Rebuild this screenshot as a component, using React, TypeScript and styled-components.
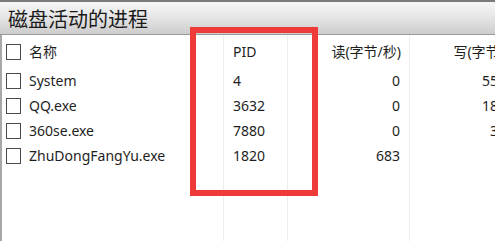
import React from "react";
import styled, { createGlobalStyle } from "styled-components";

const GlobalStyle = createGlobalStyle`
  html, body { margin: 0; padding: 0; background: #ffffff; }
  body { width: 495px; height: 241px; overflow: hidden; }
  #root { height: 100%; }
`;

const Window = styled.div`
  position: relative;
  width: 495px;
  height: 241px;
  display: flex;
  flex-direction: column;
  font-family: "Noto Sans", "Noto Sans CJK SC", sans-serif;
  color: #1e1e1e;
  overflow: hidden;
`;

const TitleBar = styled.div`
  height: 32px;
  border-top: 2px solid #7a7a7a;
  border-bottom: 1px solid #9a9a9a;
  background: linear-gradient(to bottom, #f6f6f6 0%, #e6e6e6 45%, #cdcdcd 100%);
  display: flex;
  align-items: center;
  padding-left: 8px;
  font-family: "Noto Sans CJK SC", sans-serif;
  font-size: 20px;
  color: #1a1a1a;
`;

const ListView = styled.div`
  flex: 1;
  display: flex;
  border-left: 2px solid #a8a8a8;
  background: #ffffff;
`;

const Column = styled.div<{ $width: number }>`
  flex: 0 0 ${(p) => p.$width}px;
  width: ${(p) => p.$width}px;
  display: flex;
  flex-direction: column;
  border-right: 1px solid #eeeef2;
  white-space: nowrap;
`;

const Cell = styled.div<{ $head?: boolean; $pad: string }>`
  height: ${(p) => (p.$head ? 33 : 25)}px;
  padding: ${(p) => p.$pad};
  display: flex;
  align-items: center;
  font-size: 14px;
  line-height: 1;
`;

const CellText = styled.span<{ $align?: "left" | "right" }>`
  width: 100%;
  text-align: ${(p) => p.$align ?? "left"};
`;

const CheckBox = styled.span`
  box-sizing: border-box;
  width: 15px;
  height: 16px;
  border: 1px solid #4a4a4a;
  background: #ffffff;
  margin-right: 8px;
  flex: 0 0 auto;
`;

const Highlight = styled.div`
  position: absolute;
  left: 190px;
  top: 27px;
  width: 128px;
  height: 169px;
  box-sizing: border-box;
  border: 6px solid #ef3a3a;
  pointer-events: none;
`;

const rows = [
  { name: "System", pid: "4", read: "0", write: "55296" },
  { name: "QQ.exe", pid: "3632", read: "0", write: "18432" },
  { name: "360se.exe", pid: "7880", read: "0", write: "3072" },
  { name: "ZhuDongFangYu.exe", pid: "1820", read: "683", write: "0" },
];

export default function App() {
  return (
    <>
      <GlobalStyle />
      <Window>
        <TitleBar>磁盘活动的进程</TitleBar>
        <ListView>
          <Column $width={221}>
            <Cell $head $pad="0 0 0 4px">
              <CheckBox />
              名称
            </Cell>
            {rows.map((r) => (
              <Cell key={r.name} $pad="0 0 0 4px">
                <CheckBox />
                {r.name}
              </Cell>
            ))}
          </Column>
          <Column $width={63}>
            <Cell $head $pad="0 0 0 9px">
              <CellText>PID</CellText>
            </Cell>
            {rows.map((r) => (
              <Cell key={r.name} $pad="0 0 0 9px">
                <CellText>{r.pid}</CellText>
              </Cell>
            ))}
          </Column>
          <Column $width={121}>
            <Cell $head $pad="0 8px 0 0">
              <CellText $align="right">读(字节/秒)</CellText>
            </Cell>
            {rows.map((r) => (
              <Cell key={r.name} $pad="0 9px 0 0">
                <CellText $align="right">{r.read}</CellText>
              </Cell>
            ))}
          </Column>
          <Column $width={121}>
            <Cell $head $pad="0 8px 0 0">
              <CellText $align="right">写(字节/秒)</CellText>
            </Cell>
            {rows.map((r) => (
              <Cell key={r.name} $pad="0 9px 0 0">
                <CellText $align="right">{r.write}</CellText>
              </Cell>
            ))}
          </Column>
        </ListView>
        <Highlight />
      </Window>
    </>
  );
}
